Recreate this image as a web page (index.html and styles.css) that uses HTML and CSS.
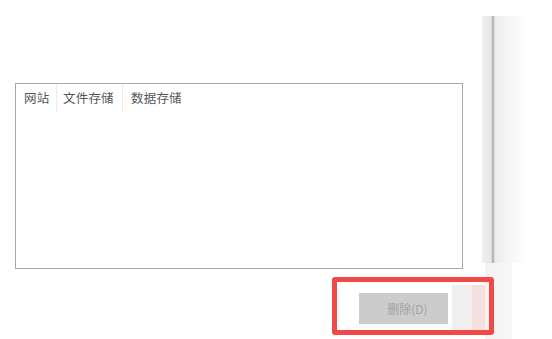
FILE: index.html
```html
<!DOCTYPE html>
<html lang="zh">
<head>
<meta charset="utf-8">
<link rel="stylesheet" href="styles.css">
</head>
<body>
<div class="page">
  <div class="main">
    <div class="list">
      <div class="head">
        <div class="col c1">网站</div>
        <div class="col c2">文件存储</div>
        <div class="col c3">数据存储</div>
      </div>
    </div>
    <div class="actions">
      <button class="btn" disabled>删除(D)</button>
    </div>
  </div>
  <div class="stripe"></div>
  <div class="fade"></div>
  <div class="ghost"></div>
  <div class="ghost2"></div>
  <div class="mark"></div>
</div>
</body>
</html>
```

FILE: styles.css
```css
html, body {
  margin: 0;
  padding: 0;
  background: #ffffff;
  font-family: "Noto Sans CJK SC", "Liberation Sans", sans-serif;
}
.page {
  position: relative;
  width: 552px;
  height: 339px;
  display: flex;
  overflow: hidden;
}
.main {
  width: 482px;
  padding: 83px 0 0 15px;
  box-sizing: border-box;
}
.list {
  width: 448px;
  height: 186px;
  box-sizing: border-box;
  border: 1px solid #a8a8a8;
  background: #fff;
}
.head {
  display: flex;
  height: 28px;
}
.col {
  font-size: 12.5px;
  color: #555555;
  line-height: 28px;
  height: 28px;
  padding: 0 6px 0 8px;
  border-right: 1px solid #ebebeb;
  letter-spacing: 0.2px;
}
.c1 { width: 26px; }
.c2 { width: 51px; padding-left: 6px; padding-right: 8px; }
.c3 { border-right: none; }
.actions {
  display: flex;
  justify-content: flex-end;
  padding: 24px 34px 0 0;
}
.btn {
  width: 89px;
  height: 31px;
  border: none;
  background: #cccccc;
  color: #a2a2a2;
  font-family: "Noto Sans CJK SC", "Liberation Sans", sans-serif;
  font-size: 12px;
  padding: 0 0 0 8px;
}
.stripe {
  width: 13px;
  margin-top: 16px;
  height: 247px;
  background: linear-gradient(to right, #f0f0f0 0px, #e6e6e6 9px, #a8a8a8 11px, #cfcfcf 12px, #e4e4e4 13px);
}
.fade {
  position: absolute;
  left: 495px;
  top: 16px;
  width: 30px;
  height: 247px;
  background: linear-gradient(to right, #ececec, #ffffff);
}
.ghost {
  position: absolute;
  left: 485px;
  top: 263px;
  width: 27px;
  height: 76px;
  background: linear-gradient(to right, #f2f2f2, #f7f7f7);
}
.ghost2 {
  position: absolute;
  left: 452px;
  top: 285px;
  width: 33px;
  height: 46px;
  background: linear-gradient(to right, #efefef 0, #efefef 20px, #f5e0e0 20px);
}
.mark {
  position: absolute;
  left: 332px;
  top: 277px;
  width: 162px;
  height: 58px;
  box-sizing: border-box;
  border: 5px solid #f24848;
  border-radius: 3px;
}
```
